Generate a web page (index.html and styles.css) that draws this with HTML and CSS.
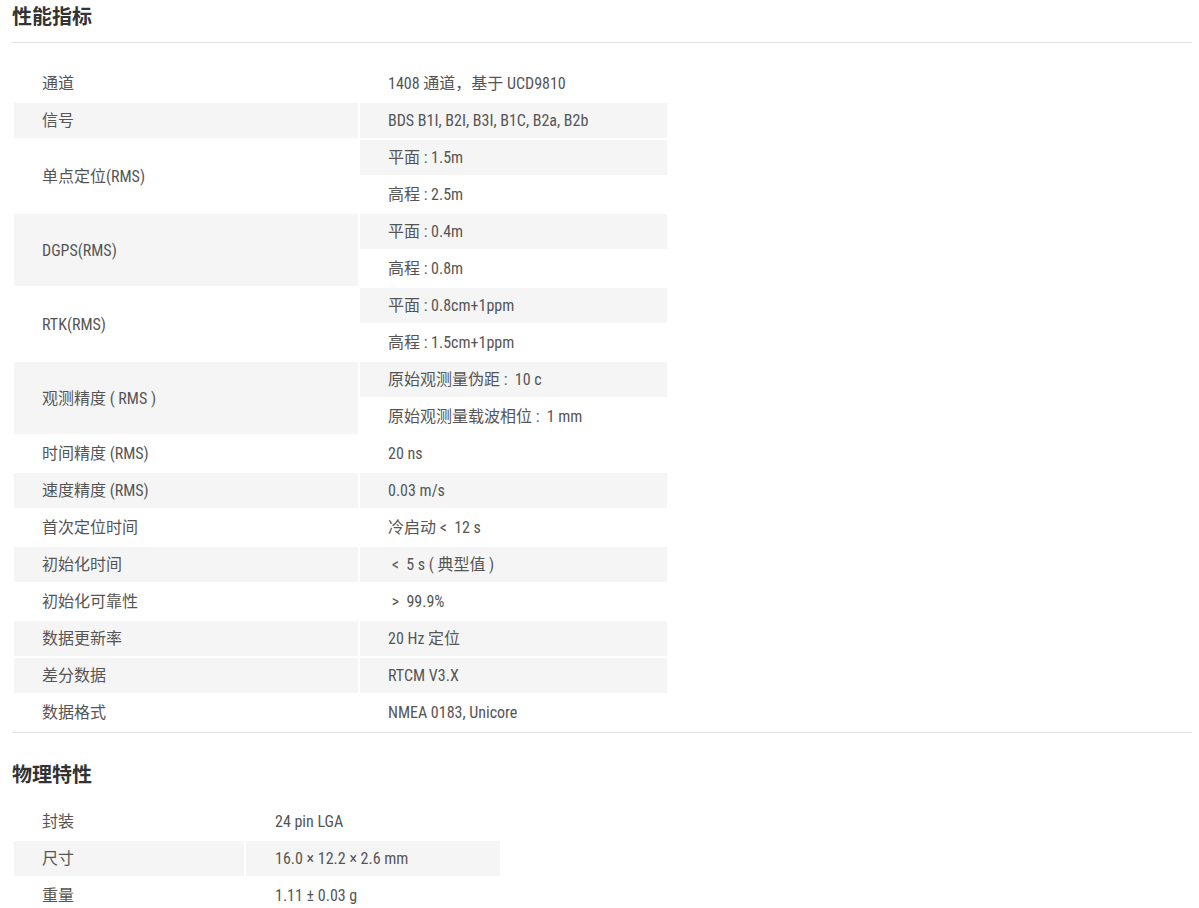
FILE: index.html
```html
<!DOCTYPE html>
<html lang="zh-CN">
<head>
<meta charset="utf-8">
<title>性能指标</title>
<link rel="stylesheet" href="styles.css">
</head>
<body>
<div class="page">
  <section class="spec spec-perf">
    <h2 class="spec-title">性能指标</h2>
    <table class="spec-table perf">
      <tbody>
        <tr><td class="k">通道</td><td class="v">1408 通道，基于 UCD9810</td></tr>
        <tr><td class="k g">信号</td><td class="v g">BDS B1I, B2I, B3I, B1C, B2a, B2b</td></tr>
        <tr><td class="k" rowspan="2">单点定位(RMS)</td><td class="v g">平面 : 1.5m</td></tr>
        <tr><td class="v">高程 : 2.5m</td></tr>
        <tr><td class="k g" rowspan="2">DGPS(RMS)</td><td class="v g">平面 : 0.4m</td></tr>
        <tr><td class="v">高程 : 0.8m</td></tr>
        <tr><td class="k" rowspan="2">RTK(RMS)</td><td class="v g">平面 : 0.8cm+1ppm</td></tr>
        <tr><td class="v">高程 : 1.5cm+1ppm</td></tr>
        <tr><td class="k g" rowspan="2">观测精度 ( RMS )</td><td class="v g">原始观测量伪距 :  10 c</td></tr>
        <tr><td class="v">原始观测量载波相位 :  1 mm</td></tr>
        <tr><td class="k">时间精度 (RMS)</td><td class="v">20 ns</td></tr>
        <tr><td class="k g">速度精度 (RMS)</td><td class="v g">0.03 m/s</td></tr>
        <tr><td class="k">首次定位时间</td><td class="v">冷启动 &lt;  12 s</td></tr>
        <tr><td class="k g">初始化时间</td><td class="v g">&nbsp;&lt;  5 s ( 典型值 )</td></tr>
        <tr><td class="k">初始化可靠性</td><td class="v">&nbsp;&gt;  99.9%</td></tr>
        <tr><td class="k g">数据更新率</td><td class="v g">20 Hz 定位</td></tr>
        <tr><td class="k g">差分数据</td><td class="v g">RTCM V3.X</td></tr>
        <tr><td class="k">数据格式</td><td class="v">NMEA 0183, Unicore</td></tr>
      </tbody>
    </table>
  </section>
  <section class="spec spec-phys">
    <h2 class="spec-title">物理特性</h2>
    <table class="spec-table phys">
      <tbody>
        <tr><td class="k">封装</td><td class="v">24 pin LGA</td></tr>
        <tr><td class="k g">尺寸</td><td class="v g">16.0 × 12.2 × 2.6 mm</td></tr>
        <tr><td class="k">重量</td><td class="v">1.11 ± 0.03 g</td></tr>
      </tbody>
    </table>
  </section>
</div>
</body>
</html>
```
FILE: styles.css
```css
html, body {
  margin: 0;
  padding: 0;
  background: #fff;
}
body {
  font-family: "Roboto Condensed", Roboto, "Noto Sans CJK SC", sans-serif;
  color: #555;
  font-size: 16px;
}
.page {
  padding: 0 7px 0 12px;
}
.spec-title {
  margin: 0;
  font-family: "Noto Sans CJK SC", sans-serif;
  font-size: 20px;
  font-weight: bold;
  line-height: 32px;
  color: #333;
}
.spec-perf {
  border-bottom: 1px solid #e3e3e3;
}
.spec-perf .spec-title {
  padding-bottom: 10px;
  border-bottom: 1px solid #e3e3e3;
}
.spec-table {
  border-collapse: separate;
  border-spacing: 2px;
}
.spec-table td {
  height: 35px;
  padding: 1px 0 0 28px;
  box-sizing: border-box;
  vertical-align: middle;
  line-height: 20px;
  white-space: pre;
}
.spec-table td.g {
  background: #f5f5f5;
}
.perf {
  margin-top: 21px;
}
.perf td.k { width: 344px; }
.perf td.v { width: 307px; }
.spec-phys .spec-title {
  margin-top: 25px;
}
.phys {
  margin-top: 12px;
}
.phys td.k { width: 230px; }
.phys td.v { width: 254px; padding-left: 29px; }
```
